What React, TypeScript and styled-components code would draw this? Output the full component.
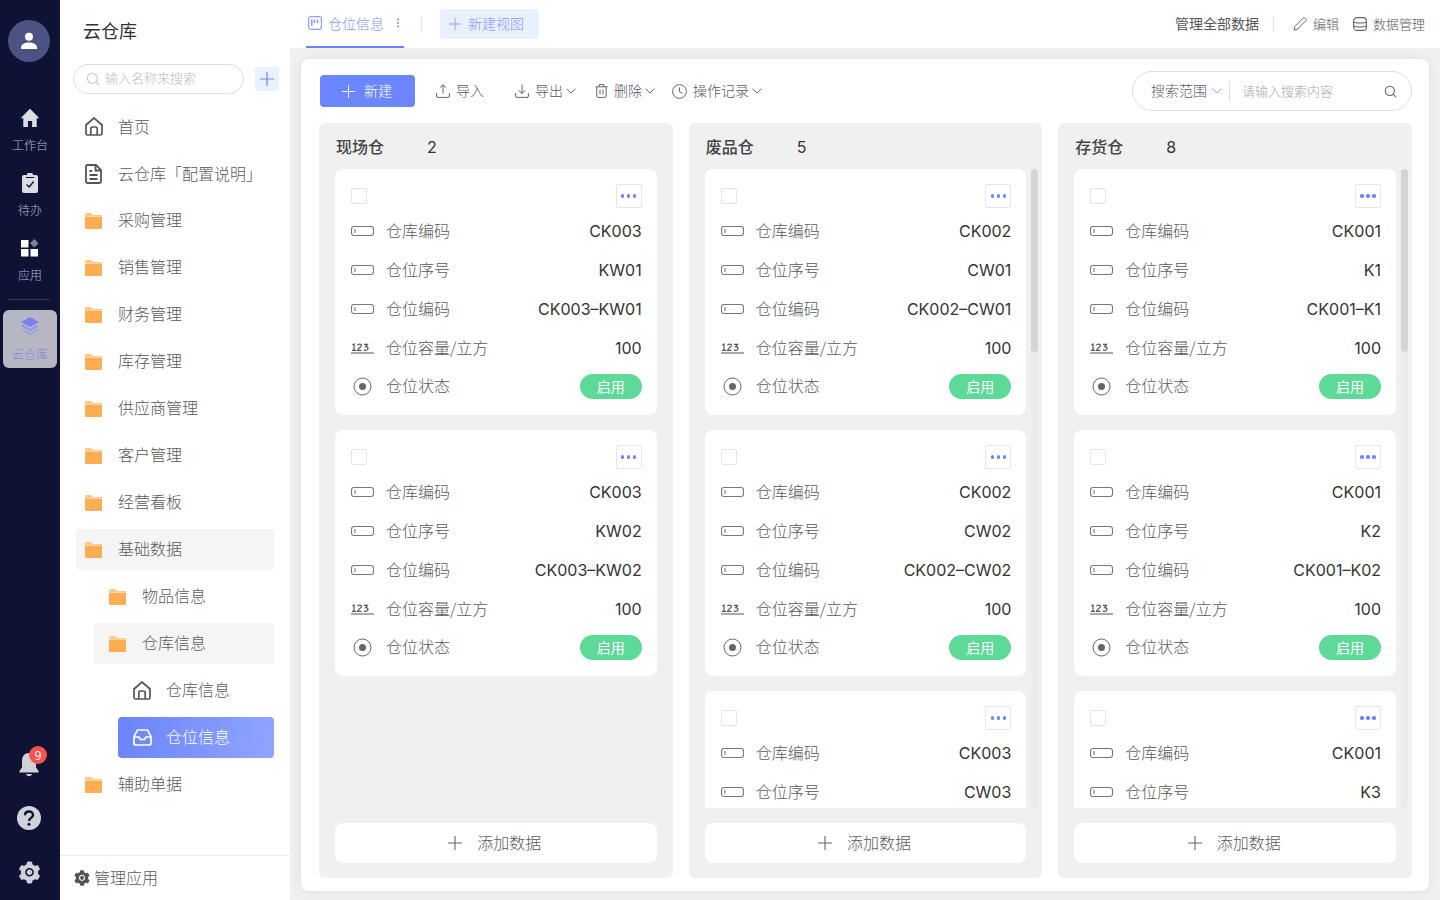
import React from "react";
import styled, { createGlobalStyle } from "styled-components";
import { AiFillSetting } from "react-icons/ai";

const Global = createGlobalStyle`
  html, body { margin: 0; padding: 0; }
  body { font-family: "Noto Sans CJK SC", "Liberation Sans", sans-serif; font-weight: 300; color: #333; background: #f0f0f0; }
  * { box-sizing: border-box; }
  svg { display: block; flex: none; }
`;

const Page = styled.div`display: flex; width: 1440px; height: 900px; overflow: hidden;`;

/* CJK glyphs sit below the centre of the Noto line box; Label lifts them onto the icon's axis. */
const Label = styled.span<{ $lift?: number }>`margin-top: ${p => -(p.$lift ?? 2)}px;`;

/* ---------- Rail ---------- */
const Rail = styled.aside`
  width: 60px; flex: none; background: #0e1235; display: flex; flex-direction: column; align-items: center;
  padding-top: 20px;
`;
const Avatar = styled.div`
  width: 42px; height: 42px; border-radius: 50%; background: #4a5382; display: flex; align-items: center; justify-content: center;
  margin-left: -2px; margin-bottom: 40px;
`;
const RailItem = styled.div`
  width: 54px; height: 58px; display: flex; flex-direction: column; align-items: center; justify-content: flex-start;
  padding-top: 6px; margin-bottom: 7px; gap: 9px; font-size: 12px; line-height: 16px; color: #b6b8c6;
`;
const RailGlyph = styled.span`height: 20px; display: flex; align-items: center; justify-content: center; margin-left: -1px;`;
const RailDivider = styled.div`width: 42px; height: 1px; background: #33375a; margin: 2px 0 10px -2px;`;
const RailActive = styled(RailItem)`
  background: #b7b7c4; border-radius: 6px; color: #7c7ce6; margin-bottom: 0; padding-top: 6px; gap: 10px;
`;
const RailSpacer = styled.div`flex: 1;`;
const RailBottom = styled.div`
  position: relative; width: 42px; height: 54px; display: flex; align-items: center; justify-content: center; margin-left: -2px;
  top: -1px;
`;
const Badge = styled.span`
  position: absolute; top: 9px; right: 3px; width: 18px; height: 18px; border-radius: 50%; background: #f9524f; color: #fff;
  font-size: 12px; font-weight: 400; line-height: 18px; text-align: center;
`;

/* ---------- Sidebar ---------- */
const Sidebar = styled.nav`
  width: 230px; flex: none; background: #fff; display: flex; flex-direction: column; position: relative;
`;
const SideTitle = styled.h1`margin: 18px 0 0 23px; font-size: 18px; line-height: 24px; font-weight: 400; color: #333;`;
const SearchRow = styled.div`display: flex; align-items: center; margin: 22px 0 12px 13px; gap: 11px;`;
const SideSearch = styled.div`
  width: 171px; height: 30px; border: 1px solid #dcdee2; border-radius: 15px; display: flex; align-items: center; gap: 5px;
  padding-left: 12px; font-size: 13px; color: #bcbec6;
`;
const AddSquare = styled.div`
  width: 24px; height: 24px; border-radius: 3px; background: #e9f1ff; display: flex; align-items: center; justify-content: center;
`;
const NavList = styled.ul`list-style: none; margin: 0; padding: 0 16px 0 16px; flex: 1; display: flex; flex-direction: column; gap: 6px;`;
const NavItem = styled.li<{ $level: number; $state?: "open" | "active" }>`
  height: 41px; border-radius: 4px; display: flex; align-items: center; font-size: 16px; color: ${p => (p.$state === "active" ? "#fff" : "#5a5a5a")};
  margin-left: ${p => [0, 18, 42][p.$level]}px;
  padding-left: ${p => (p.$level ? 15 : 9)}px;
  background: ${p => (p.$state === "open" ? "#f5f5f5" : p.$state === "active" ? "linear-gradient(100deg, #6b83ff, #90a5ff)" : "transparent")};
`;
const NavIcon = styled.span`
  width: 33px; display: flex; align-items: center; flex: none;
`;
const SideFoot = styled.div`
  height: 45px; border-top: 1px solid #ebebeb; display: flex; align-items: center; gap: 3px; padding-left: 13px; font-size: 16px; color: #5a5a5a;
`;

/* ---------- Main ---------- */
const Main = styled.main`flex: 1; min-width: 0; display: flex; flex-direction: column; background: #f0f0f0;`;
const TopBar = styled.header`
  height: 48px; flex: none; background: #fff; display: flex; align-items: center; padding-left: 16px; padding-right: 15px;
`;
const Tab = styled.div`
  height: 48px; width: 98px; border-bottom: 2px solid #6b83ff; display: flex; align-items: center; padding-left: 2px; gap: 6px;
  font-size: 14px; color: #8296f8; margin-right: 17px; position: relative;
`;
const TabDots = styled.span`margin-left: 6px;`;
const VLine = styled.span<{ $h?: number }>`width: 1px; height: ${p => p.$h ?? 14}px; background: #dedede; flex: none;`;
const NewView = styled.div`
  width: 99px; height: 30px; border-radius: 4px; background: #e9f1ff; margin-left: 18px; display: flex; align-items: center; gap: 7px;
  padding-left: 9px; font-size: 14px; color: #8296f8;
`;
const TopRight = styled.div`margin-left: auto; display: flex; align-items: center; font-size: 13px; color: #5a5a5a;`;
const ManageAll = styled.span`font-size: 14px; font-weight: 400; color: #555; margin: -2px 14px 0 0;`;
const TopAction = styled.span`display: flex; align-items: center; gap: 6px; margin-left: 14px;`;
const FirstAction = styled(TopAction)`margin-left: 19px;`;

const Panel = styled.section`
  margin: 11px 11px 9px; flex: 1; min-height: 0; background: #fff; border-radius: 8px; box-shadow: 0 0 12px rgba(0,0,0,.07);
  padding: 12px 17px 13px 18px; display: flex; flex-direction: column;
`;
const Toolbar = styled.div`height: 40px; flex: none; display: flex; align-items: center; margin-bottom: 12px;`;
const PrimaryBtn = styled.button`
  width: 95px; height: 32px; margin-left: 1px; border: 0; border-radius: 4px; background: #6b86ff; color: #fff; display: flex; align-items: center;
  padding: 0 0 0 22px; gap: 9px; font: inherit; font-size: 14px;
`;
const ToolBtn = styled.span<{ $left: number }>`
  display: flex; align-items: center; margin-left: ${p => p.$left}px; font-size: 14px; color: #5a5a5a; gap: 6px;
`;
const Chevron = styled.span`margin-left: -3px;`;
const SearchBox = styled.div`
  margin-left: auto; width: 280px; height: 40px; border: 1px solid #dfdfdf; border-radius: 20px; display: flex; align-items: center;
  padding-left: 18px; font-size: 14px; color: #5a5a5a;
`;
const ScopeChevron = styled.span`margin: 0 6px 0 4px;`;
const BoxHint = styled.span`margin: -2px 0 0 12px; font-size: 13px; color: #a8a8a8; flex: 1;`;
const BoxIcon = styled.span`margin-right: 14px;`;

const Board = styled.div`flex: 1; min-height: 0; display: grid; grid-template-columns: repeat(3, 1fr); gap: 16px;`;
const Column = styled.div`
  background: #f0f0f0; border-radius: 6px; padding: 0 16px 15px; display: flex; flex-direction: column; min-height: 0;
`;
const ColHead = styled.div`
  height: 46px; flex: none; display: flex; align-items: center; padding: 1px 0 0 1px; font-size: 16px; font-weight: 500; color: #444;
`;
const ColName = styled.span`width: 91px; margin-top: -1px;`;
const ColCount = styled.span`font-family: Inter, sans-serif; font-weight: 400; color: #333;`;
const CardList = styled.div`flex: 1; min-height: 0; overflow: hidden; position: relative; margin-right: -16px; padding-right: 16px; display: flex; flex-direction: column; gap: 15px;`;
const ScrollTrack = styled.div`position: absolute; top: 0; bottom: 0; right: 4px; width: 7px; background: #ebebeb; border-radius: 4px;`;
const ScrollThumb = styled.div`width: 100%; height: 183px; background: #d4d4d4; border-radius: 4px;`;
const Card = styled.article`
  flex: none; background: #fff; border-radius: 8px; padding: 15px 15px 9px 16px;
`;
const CardHead = styled.div`height: 24px; display: flex; align-items: center; justify-content: space-between; margin-bottom: 3px;`;
const Check = styled.span`width: 16px; height: 16px; border: 1px solid #e4e4e4; border-radius: 2px;`;
const More = styled.span`
  width: 26px; height: 24px; border: 1px solid #e6e6e6; border-radius: 2px; display: flex; align-items: center; justify-content: center; gap: 2.5px;
`;
const Dot = styled.i`width: 3.5px; height: 3.5px; border-radius: 50%; background: #6b83ff;`;
const Row = styled.div`height: 39px; display: flex; align-items: center; font-size: 16px;`;
const RowIcon = styled.span<{ $inset?: number }>`width: 35px; padding-left: ${p => p.$inset ?? 0}px; flex: none; display: flex; align-items: center;`;
const RowLabel = styled(Label)`color: #5a5a5a;`;
const RowValue = styled.span`margin-left: auto; color: #333; font-family: Inter, sans-serif; font-weight: 400;`;
const Pill = styled.span`
  margin-left: auto; width: 62px; height: 25px; border-radius: 13px; background: #5dd998; color: #fff; font-size: 14px; font-weight: 400; display: flex;
  align-items: center; justify-content: center;
`;
const AddData = styled.button`
  flex: none; height: 40px; margin-top: 15px; border: 0; border-radius: 8px; background: #fff; display: flex; align-items: center; justify-content: center;
  gap: 15px; font: inherit; font-size: 16px; color: #5a5a5a; padding: 0 2px 0 0;
`;

/* ---------- Icons ---------- */
const HomeSolid = () => (
  <svg width="20" height="20" viewBox="0 0 20 20"><path fill="#dcdde3" d="M10 .8 19.4 10.2h-2.7V19h-4.600v-6H7.900v6H3.300v-8.800H.6z" /></svg>
);
const ClipCheck = () => (
  <svg width="16" height="20" viewBox="0 0 16 20"><path fill="#dcdde3" d="M5 1.500C5 .7 5.700 0 6.500 0h3c.8 0 1.500.7 1.500 1.500V2h3a2 2 0 0 1 2 2v14a2 2 0 0 1-2 2H2a2 2 0 0 1-2-2V4a2 2 0 0 1 2-2h3z" /><path fill="none" stroke="#0e1235" strokeWidth="1.400" d="M4.500 11.500 7.200 14l4.500-5.500" /><path stroke="#0e1235" strokeWidth="1" d="M4 4.500h8" /></svg>
);
const GridIcon = () => (
  <svg width="18" height="18" viewBox="0 0 18 18"><path fill="#fff" d="M0 1h7.500v7.500H0zM0 10h7.500v7.500H0zM9.500 10H17v7.500H9.500z" /><path fill="#7f8193" d="M13.300 0 17.600 4.300 13.300 8.600 9 4.300z" /></svg>
);
const Layers = () => (
  <svg width="20" height="20" viewBox="0 0 20 20"><path fill="#7b7df0" d="M10 1 19 6 10 11 1 6z" /><path fill="#8f90ea" d="M2.800 9 1 10l9 5 9-5-1.800-1L10 13z" /><path fill="#9d9ee8" d="M2.800 13 1 14l9 5 9-5-1.800-1L10 17z" /></svg>
);
const UserIcon = () => (
  <svg width="18" height="18" viewBox="0 0 18 18"><circle cx="9" cy="4.800" r="4" fill="#fff" /><path fill="#fff" d="M1 17v-1.500C1 12.500 4.500 10.500 9 10.500s8 2 8 5V17z" /></svg>
);
const Bell = () => (
  <svg width="22" height="26" viewBox="0 0 22 26"><path fill="#cfd0d8" d="M11 2C6.500 2 4 5.500 4 10v6.500L1.500 20v1.500h19V20L18 16.500V10C18 5.500 15.500 2 11 2z" /><path fill="#cfd0d8" d="M8 23h6c-.3 1.300-1.500 2.200-3 2.200S8.300 24.300 8 23z" /></svg>
);
const Help = () => (
  <svg width="24" height="24" viewBox="0 0 24 24"><circle cx="12" cy="12" r="12" fill="#d2d3da" /><path fill="none" stroke="#0e1235" strokeWidth="2.400" d="M8 9.200c0-2.300 1.800-3.700 4-3.700s4 1.400 4 3.400c0 3-4 3-4 6.100" /><circle cx="12" cy="18.300" r="1.500" fill="#0e1235" /></svg>
);
const Search = ({ size = 14, color = "#c5c8d0" }: { size?: number; color?: string }) => (
  <svg width={size} height={size} viewBox="0 0 14 14" fill="none" stroke={color} strokeWidth="1.100"><circle cx="6.300" cy="6.300" r="5" /><path d="m10 10 3 3" /></svg>
);
const Plus = ({ size = 14, color = "#6b83ff", w = 1.200 }: { size?: number; color?: string; w?: number }) => (
  <svg width={size} height={size} viewBox="0 0 14 14" stroke={color} strokeWidth={w}><path d="M7 0v14M0 7h14" /></svg>
);
const HomeLine = ({ color = "#555" }: { color?: string }) => (
  <svg width="18" height="19" viewBox="0 0 18 19" fill="none" stroke={color} strokeWidth="1.700"><path d="M1 8 9 1l8 7v8.500a1.500 1.500 0 0 1-1.500 1.500h-13A1.500 1.500 0 0 1 1 16.500z" /><path d="M5.800 18v-6.500a1.500 1.500 0 0 1 1.500-1.500h3.400a1.500 1.500 0 0 1 1.500 1.500V18" /></svg>
);
const DocIcon = () => (
  <svg width="17" height="20" viewBox="0 0 17 20" fill="none" stroke="#555" strokeWidth="1.800"><path d="M2.500 1H11l5 5v11.500a1.500 1.500 0 0 1-1.500 1.500h-12A1.500 1.500 0 0 1 1 17.500v-15A1.500 1.500 0 0 1 2.500 1z" /><path d="M10.500 1v5.500H16M4.500 11h8M4.500 15h8M4.500 7h2.500" /></svg>
);
const Folder = () => (
  <svg width="17" height="16" viewBox="0 0 17 16"><path fill="#ffc98a" d="M0 1.200C0 .5.500 0 1.200 0h5l1.800 2H17v1H0z" /><path fill="#ffad52" d="M0 3.600h17V15a1 1 0 0 1-1 1H1a1 1 0 0 1-1-1z" /></svg>
);
const Inbox = () => (
  <svg width="19" height="17" viewBox="0 0 19 17" fill="none" stroke="#fff" strokeWidth="1.700"><path d="M4.500 1h10l3.500 6.500V14a2 2 0 0 1-2 2H3a2 2 0 0 1-2-2V7.500z" /><path d="M1 8h5l1.500 2.500h4L13 8h5" /></svg>
);
const TabIcon = () => (
  <svg width="14" height="14" viewBox="0 0 14 14" fill="none" stroke="#8fa1fb" strokeWidth="1.200"><rect x=".6" y=".6" width="12.800" height="12.800" rx="2.500" /><path d="M3.800 3.500v6.500M6.500 3.500v3.500M9.500 3.500v3.500" strokeWidth="1.600" /></svg>
);
const VDots = () => (
  <svg width="4" height="10" viewBox="0 0 4 10" fill="#7f93f5"><circle cx="2" cy="1.500" r="1.100" /><circle cx="2" cy="5" r="1.100" /><circle cx="2" cy="8.500" r="1.100" /></svg>
);
const Pencil = () => (
  <svg width="14" height="14" viewBox="0 0 14 14" fill="none" stroke="#666" strokeWidth="1"><path d="M1 13l.8-3.500L10.300 1c.6-.5 1.300-.5 1.800 0l.8.800c.5.500.5 1.300 0 1.800L4.500 12.200z" /></svg>
);
const Db = () => (
  <svg width="14" height="14" viewBox="0 0 14 14" fill="none" stroke="#666" strokeWidth="1.100"><rect x=".6" y=".6" width="12.800" height="12.800" rx="3.500" /><path d="M.6 5c2 1.300 10.800 1.300 12.800 0M.6 9c2 1.300 10.800 1.300 12.800 0" /></svg>
);
const Upload = () => (
  <svg width="14" height="14" viewBox="0 0 14 14" fill="none" stroke="#666" strokeWidth="1"><path d="M7 9.500V.800M3.800 3.800 7 .8l3.200 3M.6 9v3a1.400 1.400 0 0 0 1.400 1.400h10a1.400 1.400 0 0 0 1.400-1.400V9" /></svg>
);
const Download = () => (
  <svg width="14" height="14" viewBox="0 0 14 14" fill="none" stroke="#666" strokeWidth="1"><path d="M7 .6v8.800M3.800 6.500 7 9.500l3.200-3M.6 9v3a1.400 1.400 0 0 0 1.400 1.400h10a1.400 1.400 0 0 0 1.400-1.400V9" /></svg>
);
const Trash = () => (
  <svg width="13" height="14" viewBox="0 0 13 14" fill="none" stroke="#666" strokeWidth="1"><path d="M.5 2.800h12M4.200 2.800V.6h4.600v2.200M1.800 2.800v9.400c0 .7.500 1.200 1.200 1.200h7c.7 0 1.200-.5 1.200-1.200V2.800M5 5.500v5M8 5.500v5" /></svg>
);
const Clock = () => (
  <svg width="15" height="15" viewBox="0 0 15 15" fill="none" stroke="#666" strokeWidth="1"><circle cx="7.500" cy="7.500" r="6.900" /><path d="M7.500 3.500v4.300l3 1.500" /></svg>
);
const ChevronDown = ({ color = "#666", w = 10 }: { color?: string; w?: number }) => (
  <svg width={w} height="6" viewBox="0 0 10 6" fill="none" stroke={color} strokeWidth="1"><path d="m.6.700 4.400 4.400L9.400.700" /></svg>
);
const TextField = () => (
  <svg width="23" height="12" viewBox="0 0 23 12" fill="none" stroke="#777" strokeWidth="1.100"><rect x=".5" y="1.500" width="22" height="9" rx="2.500" /><path d="M4 4v4" /></svg>
);
const Num = () => (
  <svg width="23" height="12" viewBox="0 0 23 12" fill="none" stroke="#555"><path d="M1.500 3 3 2v6M1 8.300h4M6.500 3.200c.5-1.500 4-1.500 4 .3 0 1.500-3.500 2.500-4 4.800h4M13 2.300h3.500L14.500 4.700c2 0 2.500 1 2.500 1.800 0 2-3 2.300-4 1.200" strokeWidth="1.200" /><path d="M0 11h23" strokeWidth="1" /></svg>
);
const Radio = () => (
  <svg width="19" height="19" viewBox="0 0 19 19" fill="none"><circle cx="9.500" cy="9.500" r="8.500" stroke="#666" strokeWidth="1" /><circle cx="9.500" cy="9.500" r="3.500" fill="#666" /></svg>
);

/* ---------- Data ---------- */
type Rec = [string, string, string];
const columns: { name: string; count: number; scroll: boolean; recs: Rec[] }[] = [
  { name: "现场仓", count: 2, scroll: false, recs: [["CK003", "KW01", "CK003–KW01"], ["CK003", "KW02", "CK003–KW02"]] },
  { name: "废品仓", count: 5, scroll: true, recs: [["CK002", "CW01", "CK002–CW01"], ["CK002", "CW02", "CK002–CW02"], ["CK003", "CW03", "CK003–CW03"]] },
  { name: "存货仓", count: 8, scroll: true, recs: [["CK001", "K1", "CK001–K1"], ["CK001", "K2", "CK001–K02"], ["CK001", "K3", "CK001–K3"]] },
];
const folders1 = ["采购管理", "销售管理", "财务管理", "库存管理", "供应商管理", "客户管理", "经营看板"];

const RecordCard = ({ rec }: { rec: Rec }) => (
  <Card>
    <CardHead>
      <Check />
      <More><Dot /><Dot /><Dot /></More>
    </CardHead>
    <Row><RowIcon><TextField /></RowIcon><RowLabel>仓库编码</RowLabel><RowValue>{rec[0]}</RowValue></Row>
    <Row><RowIcon><TextField /></RowIcon><RowLabel>仓位序号</RowLabel><RowValue>{rec[1]}</RowValue></Row>
    <Row><RowIcon><TextField /></RowIcon><RowLabel>仓位编码</RowLabel><RowValue>{rec[2]}</RowValue></Row>
    <Row><RowIcon><Num /></RowIcon><RowLabel>仓位容量/立方</RowLabel><RowValue>100</RowValue></Row>
    <Row><RowIcon $inset={2}><Radio /></RowIcon><RowLabel $lift={4}>仓位状态</RowLabel><Pill><Label>启用</Label></Pill></Row>
  </Card>
);

const NavText = ({ children }: { children: React.ReactNode }) => <Label $lift={3}>{children}</Label>;

export default function App() {
  return (
    <Page>
      <Global />
      <Rail>
        <Avatar><UserIcon /></Avatar>
        <RailItem><RailGlyph><HomeSolid /></RailGlyph>工作台</RailItem>
        <RailItem><RailGlyph><ClipCheck /></RailGlyph>待办</RailItem>
        <RailItem><RailGlyph><GridIcon /></RailGlyph>应用</RailItem>
        <RailDivider />
        <RailActive><RailGlyph><Layers /></RailGlyph>云仓库</RailActive>
        <RailSpacer />
        <RailBottom><Bell /><Badge>9</Badge></RailBottom>
        <RailBottom><Help /></RailBottom>
        <RailBottom><AiFillSetting size={25} color="#cfd0d8" /></RailBottom>
      </Rail>
      <Sidebar>
        <SideTitle>云仓库</SideTitle>
        <SearchRow>
          <SideSearch><Search /><Label $lift={3}>输入名称来搜索</Label></SideSearch>
          <AddSquare><Plus /></AddSquare>
        </SearchRow>
        <NavList>
          <NavItem $level={0}><NavIcon><HomeLine /></NavIcon><Label>首页</Label></NavItem>
          <NavItem $level={0}><NavIcon><DocIcon /></NavIcon><Label>云仓库「配置说明」</Label></NavItem>
          {folders1.map(n => (
            <NavItem key={n} $level={0}><NavIcon><Folder /></NavIcon><NavText>{n}</NavText></NavItem>
          ))}
          <NavItem $level={0} $state="open"><NavIcon><Folder /></NavIcon><NavText>基础数据</NavText></NavItem>
          <NavItem $level={1}><NavIcon><Folder /></NavIcon><NavText>物品信息</NavText></NavItem>
          <NavItem $level={1} $state="open"><NavIcon><Folder /></NavIcon><NavText>仓库信息</NavText></NavItem>
          <NavItem $level={2}><NavIcon><HomeLine /></NavIcon><NavText>仓库信息</NavText></NavItem>
          <NavItem $level={2} $state="active"><NavIcon><Inbox /></NavIcon><NavText>仓位信息</NavText></NavItem>
          <NavItem $level={0}><NavIcon><Folder /></NavIcon><NavText>辅助单据</NavText></NavItem>
        </NavList>
        <SideFoot><AiFillSetting size={18} color="#555" /><Label $lift={3}>管理应用</Label></SideFoot>
      </Sidebar>
      <Main>
        <TopBar>
          <Tab><TabIcon />仓位信息<TabDots><VDots /></TabDots></Tab>
          <VLine />
          <NewView><Plus size={12} color="#7f93f5" w={1} /><Label>新建视图</Label></NewView>
          <TopRight>
            <ManageAll>管理全部数据</ManageAll>
            <VLine />
            <FirstAction><Pencil /><Label>编辑</Label></FirstAction>
            <TopAction><Db /><Label>数据管理</Label></TopAction>
          </TopRight>
        </TopBar>
        <Panel>
          <Toolbar>
            <PrimaryBtn><Plus size={13} color="#fff" w={1} /><Label>新建</Label></PrimaryBtn>
            <ToolBtn $left={21}><Upload /><Label>导入</Label></ToolBtn>
            <ToolBtn $left={31}><Download /><Label>导出</Label><Chevron><ChevronDown /></Chevron></ToolBtn>
            <ToolBtn $left={19}><Trash /><Label>删除</Label><Chevron><ChevronDown /></Chevron></ToolBtn>
            <ToolBtn $left={17}><Clock /><Label>操作记录</Label><Chevron><ChevronDown /></Chevron></ToolBtn>
            <SearchBox>
              <Label>搜索范围</Label>
              <ScopeChevron><ChevronDown color="#aaa" w={12} /></ScopeChevron>
              <VLine $h={20} />
              <BoxHint>请输入搜索内容</BoxHint>
              <BoxIcon><Search size={13} color="#666" /></BoxIcon>
            </SearchBox>
          </Toolbar>
          <Board>
            {columns.map(c => (
              <Column key={c.name}>
                <ColHead><ColName>{c.name}</ColName><ColCount>{c.count}</ColCount></ColHead>
                <CardList>
                  {c.recs.map(r => <RecordCard key={r[2]} rec={r} />)}
                  {c.scroll && <ScrollTrack><ScrollThumb /></ScrollTrack>}
                </CardList>
                <AddData><Plus size={14} color="#666" w={1.100} /><Label>添加数据</Label></AddData>
              </Column>
            ))}
          </Board>
        </Panel>
      </Main>
    </Page>
  );
}
